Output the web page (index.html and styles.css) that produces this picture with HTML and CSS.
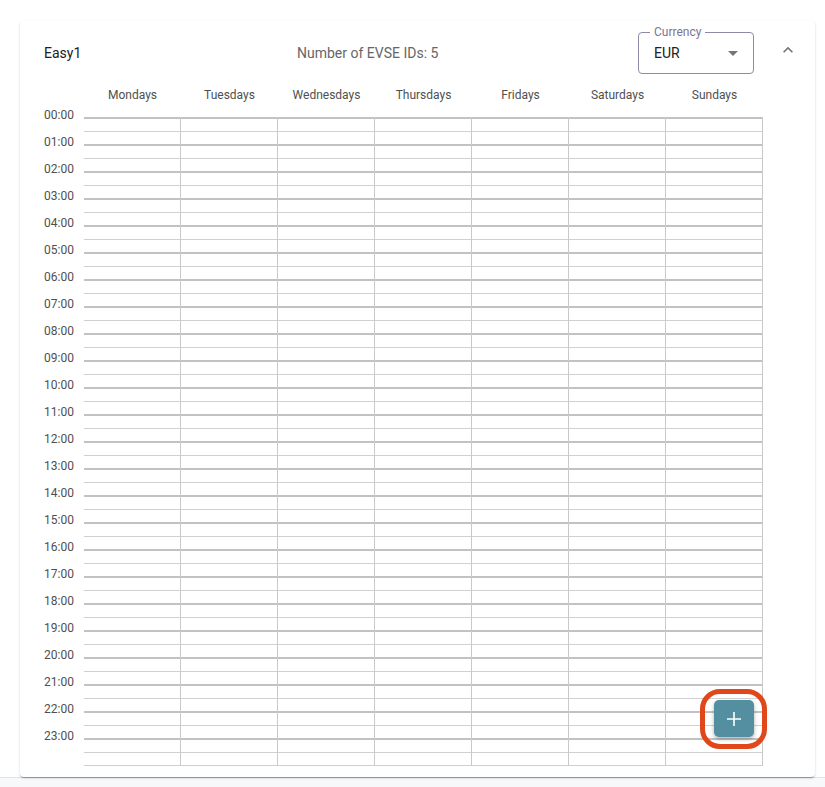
FILE: index.html
```html
<!DOCTYPE html>
<html lang="en">
<head>
	<meta charset="UTF-8">
	<meta name="viewport" content="width=device-width, initial-scale=1.0">
	<title>Tariff schedule</title>
	<link rel="stylesheet" href="styles.css">
</head>
<body>
	<div class="page">
		<div class="card">
			<div class="card-head">
				<div class="title">Easy1</div>
				<div class="count">Number of EVSE IDs: 5</div>
				<div class="select">
					<span class="select-label">Currency</span>
					<span class="select-value">EUR</span>
					<svg class="select-arrow" viewBox="0 0 24 24" width="24" height="24"><path d="M7 10l5 5 5-5z"/></svg>
				</div>
				<svg class="collapse" viewBox="0 0 24 24" width="20" height="20"><path d="M12 8l-6 6 1.41 1.41L12 10.83l4.59 4.58L18 14z"/></svg>
			</div>

			<div class="days">
				<div class="days-spacer"></div>
				<div class="day-name">Mondays</div>
				<div class="day-name">Tuesdays</div>
				<div class="day-name">Wednesdays</div>
				<div class="day-name">Thursdays</div>
				<div class="day-name">Fridays</div>
				<div class="day-name">Saturdays</div>
				<div class="day-name">Sundays</div>
			</div>

			<div class="grid">
				<div class="hours">
					<div>00:00</div><div>01:00</div><div>02:00</div><div>03:00</div>
					<div>04:00</div><div>05:00</div><div>06:00</div><div>07:00</div>
					<div>08:00</div><div>09:00</div><div>10:00</div><div>11:00</div>
					<div>12:00</div><div>13:00</div><div>14:00</div><div>15:00</div>
					<div>16:00</div><div>17:00</div><div>18:00</div><div>19:00</div>
					<div>20:00</div><div>21:00</div><div>22:00</div><div>23:00</div>
				</div>
				<div class="day-col"></div>
				<div class="day-col"></div>
				<div class="day-col"></div>
				<div class="day-col"></div>
				<div class="day-col"></div>
				<div class="day-col"></div>
				<div class="day-col"></div>
			</div>

			<button class="add-btn">
				<svg viewBox="0 0 24 24" width="24" height="24"><path d="M12 5v14M5 12h14" stroke="#fff" stroke-width="1.6" fill="none"/></svg>
			</button>
			<div class="ring"></div>
		</div>
	</div>
	<div class="bottom-bar"></div>
</body>
</html>
```

FILE: styles.css
```css
* {
	box-sizing: border-box;
	margin: 0;
	padding: 0;
}

body {
	background: #fff;
	font-family: Roboto, "Liberation Sans", Arial, sans-serif;
	color: #212121;
}

.page {
	padding: 21px 10px 0 20px;
}

.card {
	position: relative;
	background: #fff;
	border-radius: 4px;
	padding: 11px 17px 11px 24px;
	box-shadow: 0 2px 1px -1px rgba(0, 0, 0, 0.2), 0 1px 1px 0 rgba(0, 0, 0, 0.14), 0 1px 3px 0 rgba(0, 0, 0, 0.12);
}

/* header */
.card-head {
	display: flex;
	align-items: center;
	height: 42px;
}

.title {
	width: 253px;
	font-size: 14px;
	color: #212121;
}

.count {
	font-size: 14px;
	color: #666;
}

.select {
	position: relative;
	display: flex;
	align-items: center;
	width: 116px;
	height: 42px;
	margin-left: auto;
	padding: 0 8px 0 15px;
	border: 1px solid #8d89a6;
	border-radius: 4px;
}

.select-label {
	position: absolute;
	top: -8px;
	left: 11px;
	padding: 0 4px;
	background: #fff;
	font-size: 12px;
	line-height: 14px;
	color: #7a7594;
}

.select-value {
	flex: 1;
	font-size: 14px;
	color: #212121;
}

.select-arrow {
	fill: #757575;
}

.collapse {
	margin-left: 24px;
	margin-bottom: 6px;
	fill: #757575;
}

/* day names */
.days {
	display: flex;
	margin-top: 9px;
	margin-bottom: 10px;
	height: 24px;
	line-height: 24px;
}

.days-spacer {
	width: 40px;
}

.day-name {
	width: 97px;
	text-align: center;
	font-size: 12px;
	color: #4f4f4f;
}

/* schedule grid */
.grid {
	display: flex;
}

.hours {
	width: 40px;
	margin-top: -15px;
	padding-right: 10px;
	text-align: right;
	font-size: 12px;
	color: #4f4f4f;
}

.hours div {
	height: 27px;
	line-height: 27px;
}

.day-col {
	width: 97px;
	height: 649px;
	border-right: 1px solid #c9c9c9;
	border-bottom: 1px solid #cfcfcf;
	background: repeating-linear-gradient(to bottom,
		#c2c2c2 0, #c2c2c2 2px,
		transparent 2px, transparent 14px,
		#d0d0d0 14px, #d0d0d0 15px,
		transparent 15px, transparent 27px);
}

/* floating add button */
.add-btn {
	position: absolute;
	right: 61px;
	bottom: 40px;
	width: 40px;
	height: 37px;
	display: flex;
	align-items: center;
	justify-content: center;
	border: none;
	border-radius: 5px;
	background: #538fa1;
	box-shadow: 0 2px 4px rgba(0, 0, 0, 0.3);
	cursor: pointer;
}

.ring {
	position: absolute;
	right: 48px;
	bottom: 28px;
	width: 67px;
	height: 60px;
	border: 5px solid #e0481b;
	border-radius: 20px;
	pointer-events: none;
}

.bottom-bar {
	height: 40px;
	background: #f6f8fa;
	border-top: 1px solid #dde3ea;
}
```
